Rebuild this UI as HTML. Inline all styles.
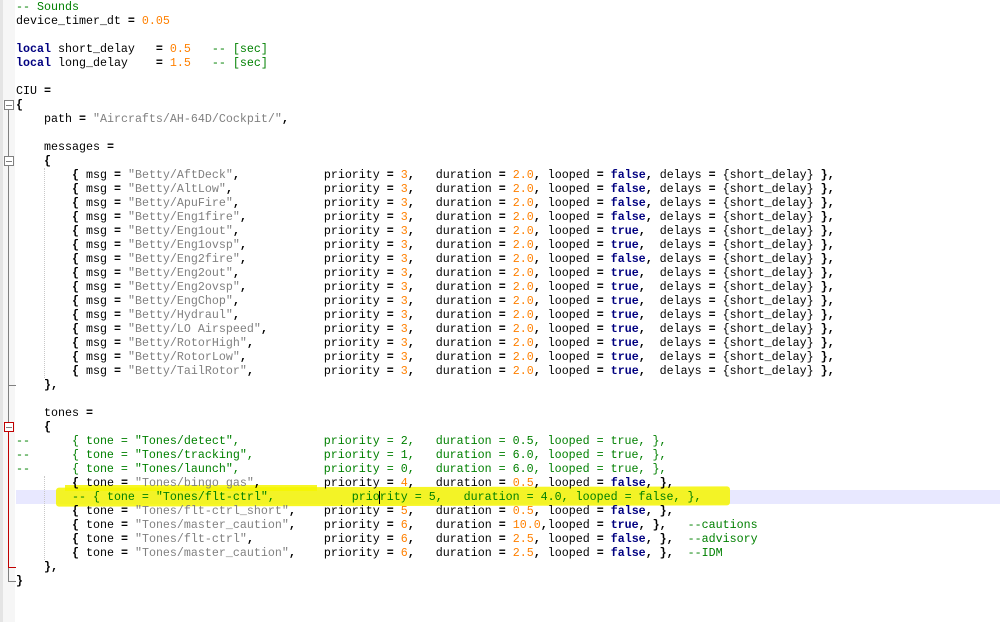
<!DOCTYPE html>
<html><head><meta charset="utf-8"><style>
html,body{margin:0;padding:0;background:#fff;width:1000px;height:622px;overflow:hidden;position:relative}
.gut{position:absolute;left:0;top:0;width:3px;height:622px;background:#e4e4e4}
.fold{position:absolute;left:3px;top:0;width:12px;height:622px;background:#f6f6f6}
.cur{position:absolute;left:16px;top:490px;width:984px;height:14px;background:#e8e8ff}
.hl{position:absolute;left:56px;top:487px;width:674px;height:19px;background:#f4f400;opacity:.85;transform:skewY(-0.1deg);border-radius:3px}
.hl2{position:absolute;left:65px;top:485px;width:252px;height:6px;background:#f4f400;opacity:.85}
pre{position:absolute;left:16px;top:0;margin:0;font-family:"Liberation Mono",monospace;font-size:11.667px;line-height:14px;color:#000;white-space:pre}
.o{font-weight:bold;color:#000}
.s{color:#808080}
.n{color:#ff8000}
.c{color:#008000}
.k{color:#000080;font-weight:bold}
.vl{position:absolute;width:1px}
.box{position:absolute;left:4px;width:8px;height:8px;border:1px solid #808080;background:#fff}
.box:after{content:"";position:absolute;left:1px;top:3.5px;width:6px;height:1px;background:#808080}
.guide{position:absolute;width:0;border-left:1px dotted #c8c8c8}
.caret{position:absolute;left:379px;top:491px;width:1px;height:13px;background:#000}
</style></head><body>
<div class="gut"></div><div class="fold"></div>
<div class="cur"></div>
<div class="hl2"></div><div class="hl"></div>
<div class="vl" style="left:8px;top:110px;height:471px;background:#808080"></div>
<div class="vl" style="left:8px;top:581px;width:8px;height:1px;background:#808080"></div>
<div class="vl" style="left:8px;top:385px;width:8px;height:1px;background:#808080"></div>
<div class="vl" style="left:8px;top:432px;height:135px;background:#c00000"></div>
<div class="vl" style="left:8px;top:567px;width:8px;height:1px;background:#c00000"></div>
<div class="box" style="top:100px"></div>
<div class="box" style="top:156px"></div>
<div class="box" style="top:422px;border-color:#c00000"></div>
<div class="guide" style="left:44px;top:168px;height:210px"></div>
<div class="guide" style="left:44px;top:476px;height:84px"></div>
<div class="caret"></div>
<pre><span class="c">-- Sounds</span>
device_timer_dt <span class="o">=</span> <span class="n">0.05</span>

<span class="k">local</span> short_delay   <span class="o">=</span> <span class="n">0.5</span>   <span class="c">-- [sec]</span>
<span class="k">local</span> long_delay    <span class="o">=</span> <span class="n">1.5</span>   <span class="c">-- [sec]</span>

CIU <span class="o">=</span>
<span class="o">{</span>
    path <span class="o">=</span> <span class="s">"Aircrafts/AH-64D/Cockpit/"</span><span class="o">,</span>

    messages <span class="o">=</span>
    <span class="o">{</span>
        <span class="o">{</span> msg <span class="o">=</span> <span class="s">"Betty/AftDeck"</span><span class="o">,</span>            priority <span class="o">=</span> <span class="n">3</span><span class="o">,</span>   duration <span class="o">=</span> <span class="n">2.0</span><span class="o">,</span> looped <span class="o">=</span> <span class="k">false</span><span class="o">,</span> delays <span class="o">=</span> {short_delay} <span class="o">},</span>
        <span class="o">{</span> msg <span class="o">=</span> <span class="s">"Betty/AltLow"</span><span class="o">,</span>             priority <span class="o">=</span> <span class="n">3</span><span class="o">,</span>   duration <span class="o">=</span> <span class="n">2.0</span><span class="o">,</span> looped <span class="o">=</span> <span class="k">false</span><span class="o">,</span> delays <span class="o">=</span> {short_delay} <span class="o">},</span>
        <span class="o">{</span> msg <span class="o">=</span> <span class="s">"Betty/ApuFire"</span><span class="o">,</span>            priority <span class="o">=</span> <span class="n">3</span><span class="o">,</span>   duration <span class="o">=</span> <span class="n">2.0</span><span class="o">,</span> looped <span class="o">=</span> <span class="k">false</span><span class="o">,</span> delays <span class="o">=</span> {short_delay} <span class="o">},</span>
        <span class="o">{</span> msg <span class="o">=</span> <span class="s">"Betty/Eng1fire"</span><span class="o">,</span>           priority <span class="o">=</span> <span class="n">3</span><span class="o">,</span>   duration <span class="o">=</span> <span class="n">2.0</span><span class="o">,</span> looped <span class="o">=</span> <span class="k">false</span><span class="o">,</span> delays <span class="o">=</span> {short_delay} <span class="o">},</span>
        <span class="o">{</span> msg <span class="o">=</span> <span class="s">"Betty/Eng1out"</span><span class="o">,</span>            priority <span class="o">=</span> <span class="n">3</span><span class="o">,</span>   duration <span class="o">=</span> <span class="n">2.0</span><span class="o">,</span> looped <span class="o">=</span> <span class="k">true</span><span class="o">,</span>  delays <span class="o">=</span> {short_delay} <span class="o">},</span>
        <span class="o">{</span> msg <span class="o">=</span> <span class="s">"Betty/Eng1ovsp"</span><span class="o">,</span>           priority <span class="o">=</span> <span class="n">3</span><span class="o">,</span>   duration <span class="o">=</span> <span class="n">2.0</span><span class="o">,</span> looped <span class="o">=</span> <span class="k">true</span><span class="o">,</span>  delays <span class="o">=</span> {short_delay} <span class="o">},</span>
        <span class="o">{</span> msg <span class="o">=</span> <span class="s">"Betty/Eng2fire"</span><span class="o">,</span>           priority <span class="o">=</span> <span class="n">3</span><span class="o">,</span>   duration <span class="o">=</span> <span class="n">2.0</span><span class="o">,</span> looped <span class="o">=</span> <span class="k">false</span><span class="o">,</span> delays <span class="o">=</span> {short_delay} <span class="o">},</span>
        <span class="o">{</span> msg <span class="o">=</span> <span class="s">"Betty/Eng2out"</span><span class="o">,</span>            priority <span class="o">=</span> <span class="n">3</span><span class="o">,</span>   duration <span class="o">=</span> <span class="n">2.0</span><span class="o">,</span> looped <span class="o">=</span> <span class="k">true</span><span class="o">,</span>  delays <span class="o">=</span> {short_delay} <span class="o">},</span>
        <span class="o">{</span> msg <span class="o">=</span> <span class="s">"Betty/Eng2ovsp"</span><span class="o">,</span>           priority <span class="o">=</span> <span class="n">3</span><span class="o">,</span>   duration <span class="o">=</span> <span class="n">2.0</span><span class="o">,</span> looped <span class="o">=</span> <span class="k">true</span><span class="o">,</span>  delays <span class="o">=</span> {short_delay} <span class="o">},</span>
        <span class="o">{</span> msg <span class="o">=</span> <span class="s">"Betty/EngChop"</span><span class="o">,</span>            priority <span class="o">=</span> <span class="n">3</span><span class="o">,</span>   duration <span class="o">=</span> <span class="n">2.0</span><span class="o">,</span> looped <span class="o">=</span> <span class="k">true</span><span class="o">,</span>  delays <span class="o">=</span> {short_delay} <span class="o">},</span>
        <span class="o">{</span> msg <span class="o">=</span> <span class="s">"Betty/Hydraul"</span><span class="o">,</span>            priority <span class="o">=</span> <span class="n">3</span><span class="o">,</span>   duration <span class="o">=</span> <span class="n">2.0</span><span class="o">,</span> looped <span class="o">=</span> <span class="k">true</span><span class="o">,</span>  delays <span class="o">=</span> {short_delay} <span class="o">},</span>
        <span class="o">{</span> msg <span class="o">=</span> <span class="s">"Betty/LO Airspeed"</span><span class="o">,</span>        priority <span class="o">=</span> <span class="n">3</span><span class="o">,</span>   duration <span class="o">=</span> <span class="n">2.0</span><span class="o">,</span> looped <span class="o">=</span> <span class="k">true</span><span class="o">,</span>  delays <span class="o">=</span> {short_delay} <span class="o">},</span>
        <span class="o">{</span> msg <span class="o">=</span> <span class="s">"Betty/RotorHigh"</span><span class="o">,</span>          priority <span class="o">=</span> <span class="n">3</span><span class="o">,</span>   duration <span class="o">=</span> <span class="n">2.0</span><span class="o">,</span> looped <span class="o">=</span> <span class="k">true</span><span class="o">,</span>  delays <span class="o">=</span> {short_delay} <span class="o">},</span>
        <span class="o">{</span> msg <span class="o">=</span> <span class="s">"Betty/RotorLow"</span><span class="o">,</span>           priority <span class="o">=</span> <span class="n">3</span><span class="o">,</span>   duration <span class="o">=</span> <span class="n">2.0</span><span class="o">,</span> looped <span class="o">=</span> <span class="k">true</span><span class="o">,</span>  delays <span class="o">=</span> {short_delay} <span class="o">},</span>
        <span class="o">{</span> msg <span class="o">=</span> <span class="s">"Betty/TailRotor"</span><span class="o">,</span>          priority <span class="o">=</span> <span class="n">3</span><span class="o">,</span>   duration <span class="o">=</span> <span class="n">2.0</span><span class="o">,</span> looped <span class="o">=</span> <span class="k">true</span><span class="o">,</span>  delays <span class="o">=</span> {short_delay} <span class="o">},</span>
    <span class="o">},</span>

    tones <span class="o">=</span>
    <span class="o">{</span>
<span class="c">--      { tone = "Tones/detect",            priority = 2,   duration = 0.5, looped = true, },</span>
<span class="c">--      { tone = "Tones/tracking",          priority = 1,   duration = 6.0, looped = true, },</span>
<span class="c">--      { tone = "Tones/launch",            priority = 0,   duration = 6.0, looped = true, },</span>
        <span class="o">{</span> tone <span class="o">=</span> <span class="s">"Tones/bingo gas"</span><span class="o">,</span>         priority <span class="o">=</span> <span class="n">4</span><span class="o">,</span>   duration <span class="o">=</span> <span class="n">0.5</span><span class="o">,</span> looped <span class="o">=</span> <span class="k">false</span><span class="o">, },</span>
        <span class="c">-- { tone = "Tones/flt-ctrl",           priority = 5,   duration = 4.0, looped = false, },</span>
        <span class="o">{</span> tone <span class="o">=</span> <span class="s">"Tones/flt-ctrl_short"</span><span class="o">,</span>    priority <span class="o">=</span> <span class="n">5</span><span class="o">,</span>   duration <span class="o">=</span> <span class="n">0.5</span><span class="o">,</span> looped <span class="o">=</span> <span class="k">false</span><span class="o">, },</span>
        <span class="o">{</span> tone <span class="o">=</span> <span class="s">"Tones/master_caution"</span><span class="o">,</span>    priority <span class="o">=</span> <span class="n">6</span><span class="o">,</span>   duration <span class="o">=</span> <span class="n">10.0</span><span class="o">,</span>looped <span class="o">=</span> <span class="k">true</span><span class="o">, },</span>   <span class="c">--cautions</span>
        <span class="o">{</span> tone <span class="o">=</span> <span class="s">"Tones/flt-ctrl"</span><span class="o">,</span>          priority <span class="o">=</span> <span class="n">6</span><span class="o">,</span>   duration <span class="o">=</span> <span class="n">2.5</span><span class="o">,</span> looped <span class="o">=</span> <span class="k">false</span><span class="o">, },</span>  <span class="c">--advisory</span>
        <span class="o">{</span> tone <span class="o">=</span> <span class="s">"Tones/master_caution"</span><span class="o">,</span>    priority <span class="o">=</span> <span class="n">6</span><span class="o">,</span>   duration <span class="o">=</span> <span class="n">2.5</span><span class="o">,</span> looped <span class="o">=</span> <span class="k">false</span><span class="o">, },</span>  <span class="c">--IDM</span>
    <span class="o">},</span>
<span class="o">}</span>
</pre>
</body></html>
